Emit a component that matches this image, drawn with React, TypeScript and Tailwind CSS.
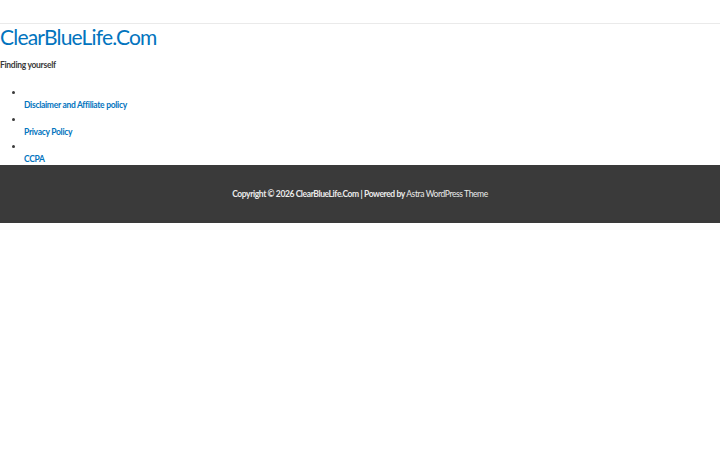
const links = ['Disclaimer and Affiliate policy', 'Privacy Policy', 'CCPA']

export default function App() {
  return (
    <div className="min-h-[450px] bg-white text-[8.5px] text-[#3a3a3a]" style={{ fontFamily: 'Lato, "Open Sans", sans-serif' }}>
      <div className="h-[24px] border-b border-[#eaeaea]" />
      <header>
        <h1 className="mt-[1px] text-[21px] leading-[24px] font-normal text-[#0274be] tracking-[-0.8px]">
          ClearBlueLife.Com
        </h1>
        <p className="mt-[11px] leading-[11px] font-bold tracking-[-0.3px] text-[#3a3a3a]">Finding yourself</p>
      </header>
      <ul className="mt-[15px] list-disc pl-[24px] font-bold tracking-[-0.3px]">
        {links.map((l) => (
          <li key={l} className="leading-[13px] mb-[1px] last:mb-0">
            <br />
            <a href="#" className="text-[#0274be]">{l}</a>
          </li>
        ))}
      </ul>
      <footer className="-mt-[1px] h-[58px] bg-[#3a3a3a] flex items-center justify-center">
        <span className="text-[#ebebeb] font-bold tracking-[-0.4px]">
          Copyright © 2026 ClearBlueLife.Com | Powered by <a href="#" className="text-[#ebebeb] font-normal">Astra WordPress Theme</a>
        </span>
      </footer>
    </div>
  )
}
